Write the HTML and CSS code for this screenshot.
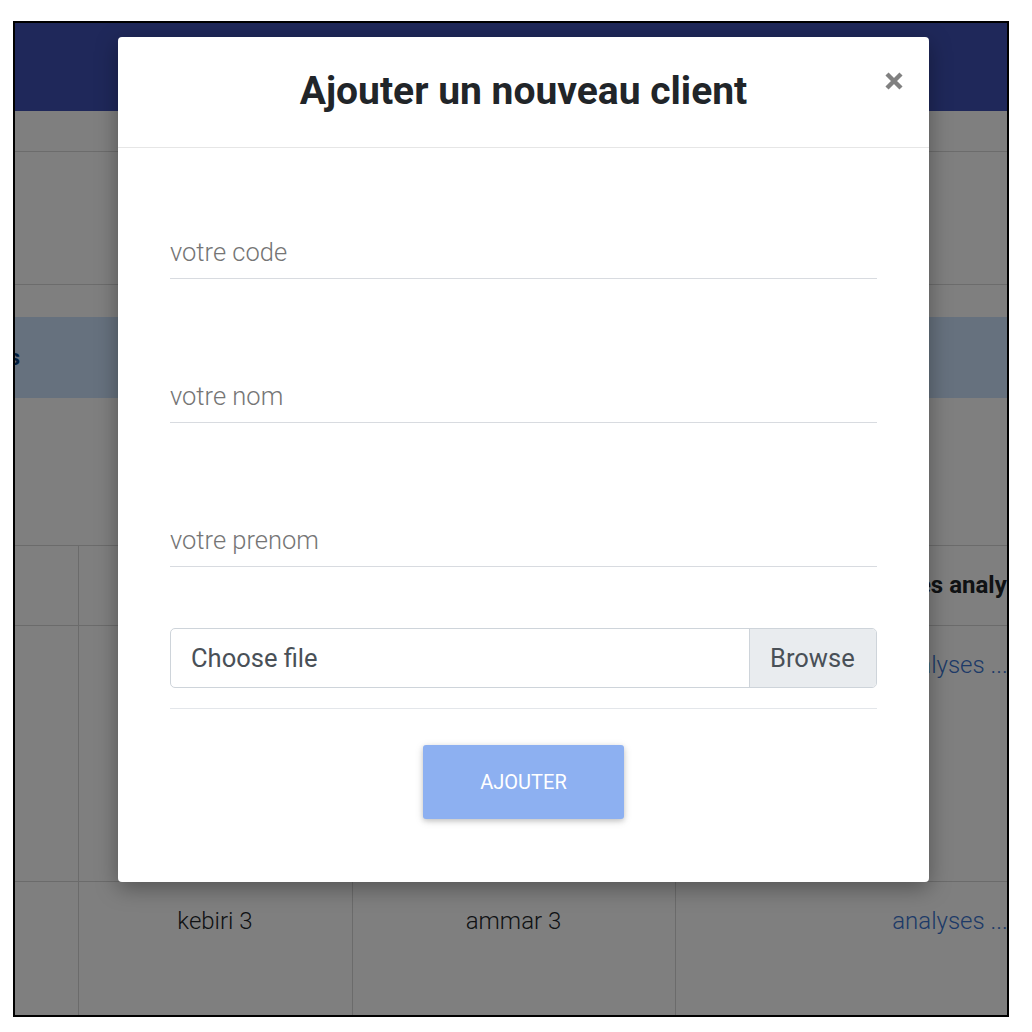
FILE: index.html
```html
<!DOCTYPE html>
<html lang="fr">
<head>
<meta charset="utf-8">
<title>Ajouter un nouveau client</title>
<link rel="stylesheet" href="styles.css">
</head>
<body>
<div class="frame">
  <div class="app">
    <header class="navbar"></header>
    <div class="toolbar"></div>
    <div class="searchbar"></div>
    <div class="alert"><span class="alert-text">Liste des clients</span></div>
    <div class="spacer"></div>
    <table class="table">
      <colgroup>
        <col class="c1"><col class="c2"><col class="c3"><col class="c4">
      </colgroup>
      <thead>
        <tr class="head-row">
          <th></th><th></th><th></th><th>Liste des analyses</th>
        </tr>
      </thead>
      <tbody>
        <tr class="row-tall">
          <td></td><td></td><td></td><td><a href="#">analyses ...</a></td>
        </tr>
        <tr class="row-last">
          <td></td><td>kebiri 3</td><td>ammar 3</td><td><a href="#">analyses ...</a></td>
        </tr>
      </tbody>
    </table>

    <div class="overlay"></div>

    <div class="modal">
      <div class="modal-header">
        <h4 class="modal-title">Ajouter un nouveau client</h4>
        <button class="close" type="button" aria-label="Close">
          <svg width="18" height="18" viewBox="0 0 18 18"><path d="M2 2 L16 16 M16 2 L2 16" stroke="#808080" stroke-width="4.4" fill="none"/></svg>
        </button>
      </div>
      <div class="modal-body">
        <input class="field" type="text" placeholder="votre code">
        <input class="field" type="text" placeholder="votre nom">
        <input class="field" type="text" placeholder="votre prenom">
        <div class="custom-file">
          <span class="file-label">Choose file</span>
          <span class="file-browse">Browse</span>
        </div>
        <hr class="sep">
        <div class="actions">
          <button class="btn-add" type="button">AJOUTER</button>
        </div>
      </div>
    </div>
  </div>
</div>
</body>
</html>
```

FILE: styles.css
```css
* { box-sizing: border-box; }

html, body {
  margin: 0;
  padding: 0;
  background: #ffffff;
  font-family: Roboto, "Liberation Sans", Arial, sans-serif;
}

.frame {
  margin: 21px 0 0 13px;
  width: 996px;
  height: 996px;
  border: 2px solid #000;
}

.app {
  position: relative;
  width: 992px;
  height: 992px;
  overflow: hidden;
  background: #ffffff;
}

.navbar {
  height: 88px;
  background: #3f51b5;
}

.toolbar {
  height: 41px;
  border-bottom: 1px solid #d9d9d9;
}

.searchbar {
  height: 133px;
  border-bottom: 1px solid #d9d9d9;
}

.alert {
  margin-top: 32px;
  height: 81px;
  background: #cce2fd;
  display: flex;
  align-items: center;
  overflow: hidden;
}

.alert-text {
  margin-left: -295px;
  width: 300px;
  text-align: right;
  font-size: 22px;
  font-weight: 700;
  color: #003b7a;
  white-space: nowrap;
}

.spacer {
  height: 147px;
}

.table {
  border-collapse: collapse;
  table-layout: fixed;
  width: 1200px;
  font-size: 24px;
  font-weight: 300;
  color: #212529;
}

.c1 { width: 63px; }
.c2 { width: 274px; }
.c3 { width: 323px; }
.c4 { width: 540px; }

.table th, .table td {
  border: 1px solid #d6d6d6;
  text-align: center;
  vertical-align: top;
  padding: 21px 12px 0;
  line-height: 36px;
  white-space: nowrap;
}

.table th {
  font-weight: 700;
  font-size: 24px;
}

.head-row { height: 80px; }
.row-tall { height: 256px; }
.row-last { height: 300px; }

.table tr > :first-child { border-left: none; }

.table td:last-child { padding-left: 22px; }

.table a {
  color: #3a74d0;
  text-decoration: none;
}

.overlay {
  position: absolute;
  inset: 0;
  background: rgba(0, 0, 0, 0.5);
}

.modal {
  position: absolute;
  left: 103px;
  top: 14px;
  width: 811px;
  height: 845px;
  background: #ffffff;
  border-radius: 4px;
  box-shadow: 0 6px 22px rgba(0, 0, 0, 0.35);
}

.modal-header {
  height: 111px;
  border-bottom: 1px solid #e6e6e6;
  display: grid;
  grid-template-columns: 1fr auto 1fr;
  align-items: center;
  padding-bottom: 1px;
}

.modal-title {
  grid-column: 2;
  margin: 0;
  font-size: 39px;
  font-weight: 700;
  line-height: 1.2;
  color: #212529;
}

.close {
  grid-column: 3;
  justify-self: end;
  align-self: start;
  margin: 35px 26px 0 0;
  padding: 0;
  border: none;
  background: none;
  width: 18px;
  height: 18px;
  display: flex;
}

.modal-body {
  padding: 77px 52px 0;
  display: flex;
  flex-direction: column;
}

.field {
  display: block;
  width: 100%;
  height: 54px;
  margin: 0 0 90px;
  padding: 0;
  border: none;
  border-bottom: 1px solid #d8dbe0;
  background: transparent;
  font-family: Roboto, "Liberation Sans", Arial, sans-serif;
  font-size: 25.5px;
  font-weight: 300;
  color: #212529;
  outline: none;
}

.field:nth-of-type(3) { margin-bottom: 61px; }

.field::placeholder {
  color: #757575;
  opacity: 1;
}

.custom-file {
  display: flex;
  height: 60px;
  border: 1px solid #ced4da;
  border-radius: 5px;
  overflow: hidden;
  font-size: 25.5px;
  color: #495057;
}

.file-label {
  flex: 1;
  display: flex;
  align-items: center;
  padding-left: 20px;
}

.file-browse {
  display: flex;
  align-items: center;
  padding: 0 20px 0 20px;
  width: 127px;
  background: #e9ecef;
  border-left: 1px solid #ced4da;
}

.sep {
  margin: 20px 0 0;
  border: 0;
  border-top: 1px solid #e3e6ea;
  height: 0;
}

.actions {
  display: flex;
  justify-content: center;
  margin-top: 36px;
}

.btn-add {
  width: 201px;
  height: 74px;
  border: none;
  border-radius: 3px;
  background: #8db0f1;
  color: #ffffff;
  font-family: Roboto, "Liberation Sans", Arial, sans-serif;
  font-size: 20px;
  font-weight: 400;
  letter-spacing: 0;
  box-shadow: 0 2px 5px rgba(0, 0, 0, 0.16), 0 2px 10px rgba(0, 0, 0, 0.12);
}
```
